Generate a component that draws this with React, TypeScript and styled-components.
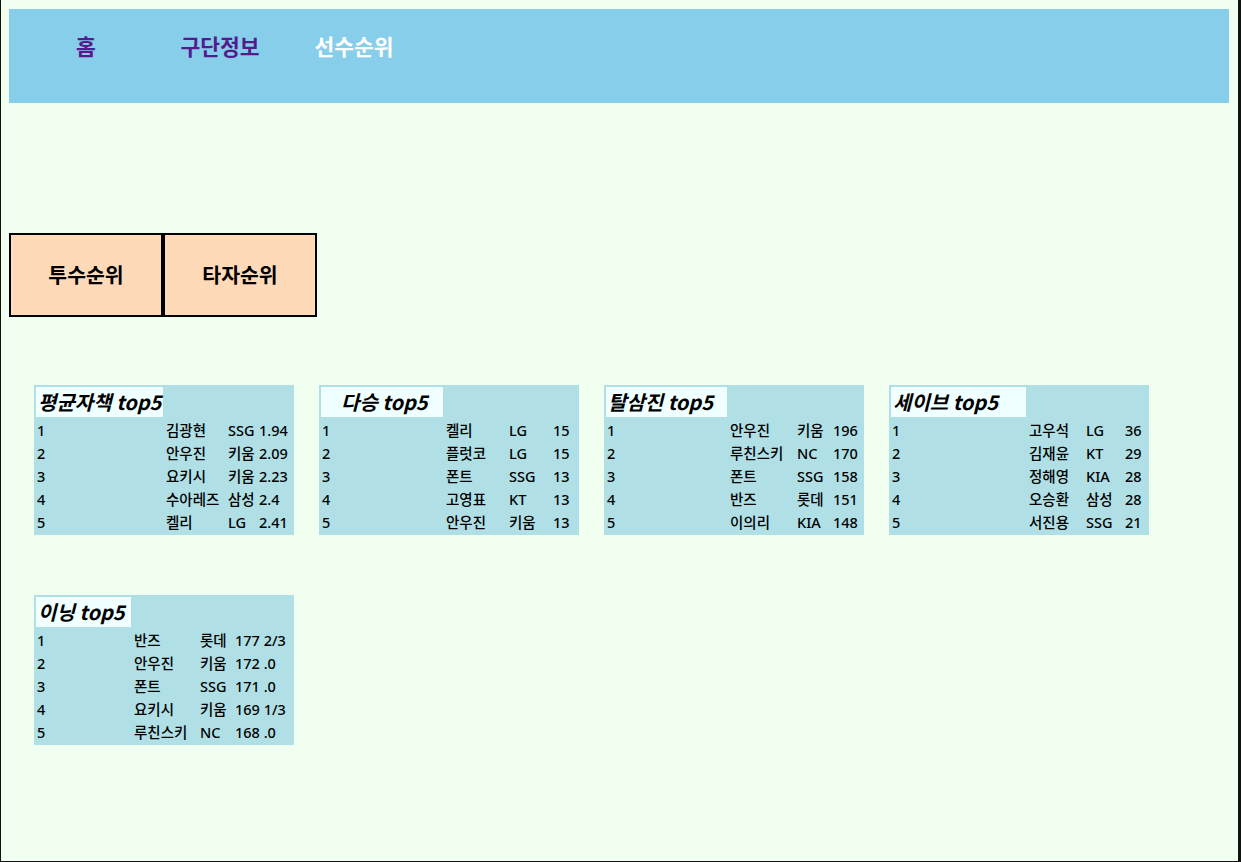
import React from "react";
import styled, { createGlobalStyle } from "styled-components";

const Global = createGlobalStyle`
  html, body { margin: 0; padding: 0; background: #f0fff0; }
  * { box-sizing: border-box; }
  body { font-family: "Noto Sans", "Noto Sans CJK KR", sans-serif; }
`;

const Page = styled.div`
  min-height: 862px;
  background: #f0fff0;
  border-left: 1px solid #111;
  border-right: 3px solid #111;
  border-bottom: 1px solid #111;
  padding: 9px 9px 0 8px;
`;

const Header = styled.header`
  height: 94px;
  background: #87ceeb;
  display: flex;
  align-items: flex-start;
  padding: 23px 0 0 10px;
`;

const NavItem = styled.a<{ $active?: boolean }>`
  width: 134px;
  text-align: center;
  line-height: 28px;
  font-family: "Noto Sans CJK KR", sans-serif;
  font-size: 21.5px;
  font-weight: 700;
  color: ${(p) => (p.$active ? "#ffffff" : "#551a8b")};
  text-decoration: none;
`;

const TabRow = styled.div`
  display: flex;
  margin-top: 130px;
`;

const TabButton = styled.div`
  width: 154px;
  height: 84px;
  border: 2px solid #000;
  background: #ffdab9;
  display: flex;
  align-items: center;
  justify-content: center;
  padding-bottom: 3px;
  font-family: "Noto Sans CJK KR", sans-serif;
  font-size: 20.5px;
  font-weight: 700;
  color: #000;
`;

const Boards = styled.div`
  display: grid;
  grid-template-columns: repeat(4, 260px);
  column-gap: 25px;
  row-gap: 60px;
  margin-top: 68px;
  padding-left: 25px;
`;

const Board = styled.div<{ $cols: string }>`
  width: 260px;
  background: #b0e0e6;
  padding: 2px 2px 3px;
  display: grid;
  grid-template-columns: ${(p) => p.$cols};
  grid-template-rows: 30px repeat(5, 21px);
  column-gap: 2px;
  row-gap: 2px;
  color: #000;
`;

const Title = styled.div<{ $indent: number }>`
  grid-column: 1 / 2;
  background: #f0ffff;
  padding-left: ${(p) => p.$indent}px;
  font-family: "Noto Sans CJK KR", sans-serif;
  font-size: 20px;
  font-weight: 700;
  font-style: italic;
  line-height: 30px;
  white-space: nowrap;
`;

const TitleFill = styled.div`
  grid-column: 2 / 5;
`;

const Cell = styled.div`
  padding: 1px 1px 0;
  font-size: 14.5px;
  font-weight: 500;
  line-height: 21px;
  white-space: nowrap;
`;

type Row = [string, string, string];
type BoardData = { title: string; cols: string; indent: number; rows: Row[] };

const boards: BoardData[] = [
  {
    title: "평균자책 top5",
    cols: "127px 60px 29px 34px",
    indent: 2,
    rows: [
      ["김광현", "SSG", "1.94"],
      ["안우진", "키움", "2.09"],
      ["요키시", "키움", "2.23"],
      ["수아레즈", "삼성", "2.4"],
      ["켈리", "LG", "2.41"],
    ],
  },
  {
    title: "다승 top5",
    cols: "122px 61px 42px 25px",
    indent: 20,
    rows: [
      ["켈리", "LG", "15"],
      ["플럿코", "LG", "15"],
      ["폰트", "SSG", "13"],
      ["고영표", "KT", "13"],
      ["안우진", "키움", "13"],
    ],
  },
  {
    title: "탈삼진 top5",
    cols: "121px 65px 34px 30px",
    indent: 2,
    rows: [
      ["안우진", "키움", "196"],
      ["루친스키", "NC", "170"],
      ["폰트", "SSG", "158"],
      ["반즈", "롯데", "151"],
      ["이의리", "KIA", "148"],
    ],
  },
  {
    title: "세이브 top5",
    cols: "135px 55px 37px 23px",
    indent: 2,
    rows: [
      ["고우석", "LG", "36"],
      ["김재윤", "KT", "29"],
      ["정해영", "KIA", "28"],
      ["오승환", "삼성", "28"],
      ["서진용", "SSG", "21"],
    ],
  },
  {
    title: "이닝 top5",
    cols: "95px 64px 33px 58px",
    indent: 2,
    rows: [
      ["반즈", "롯데", "177 2/3"],
      ["안우진", "키움", "172 .0"],
      ["폰트", "SSG", "171 .0"],
      ["요키시", "키움", "169 1/3"],
      ["루친스키", "NC", "168 .0"],
    ],
  },
];

export default function App() {
  return (
    <>
      <Global />
      <Page>
        <Header>
          <NavItem>홈</NavItem>
          <NavItem>구단정보</NavItem>
          <NavItem $active>선수순위</NavItem>
        </Header>
        <TabRow>
          <TabButton>투수순위</TabButton>
          <TabButton>타자순위</TabButton>
        </TabRow>
        <Boards>
          {boards.map((b) => (
            <Board key={b.title} $cols={b.cols}>
              <Title $indent={b.indent}>{b.title}</Title>
              <TitleFill />
              {b.rows.map((r, i) => (
                <React.Fragment key={i}>
                  <Cell>{i + 1}</Cell>
                  <Cell>{r[0]}</Cell>
                  <Cell>{r[1]}</Cell>
                  <Cell>{r[2]}</Cell>
                </React.Fragment>
              ))}
            </Board>
          ))}
        </Boards>
      </Page>
    </>
  );
}
